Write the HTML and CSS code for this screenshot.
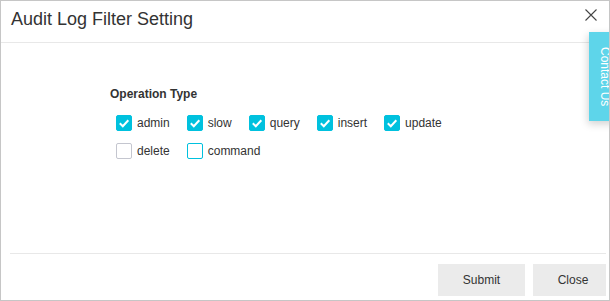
FILE: index.html
```html
<!DOCTYPE html>
<html>
<head>
<meta charset="utf-8">
<link rel="stylesheet" href="styles.css">
</head>
<body>
<div class="dialog">
  <div class="header">
    <div class="title">Audit Log Filter Setting</div>
    <svg class="close-x" width="12" height="12" viewBox="0 0 12 12"><path d="M0.5 0.5 L11.5 11.5 M11.5 0.5 L0.5 11.5" stroke="#444" stroke-width="1.1" fill="none"/></svg>
  </div>
  <div class="body">
    <div class="form">
      <div class="label">Operation Type</div>
      <div class="options">
        <label class="opt"><span class="cb on"><svg width="16" height="16" viewBox="0 0 16 16"><path d="M3.8 8.3 L6.8 11.2 L12.3 5.2" stroke="#fff" stroke-width="2" fill="none"/></svg></span>admin</label>
        <label class="opt"><span class="cb on"><svg width="16" height="16" viewBox="0 0 16 16"><path d="M3.8 8.3 L6.8 11.2 L12.3 5.2" stroke="#fff" stroke-width="2" fill="none"/></svg></span>slow</label>
        <label class="opt"><span class="cb on"><svg width="16" height="16" viewBox="0 0 16 16"><path d="M3.8 8.3 L6.8 11.2 L12.3 5.2" stroke="#fff" stroke-width="2" fill="none"/></svg></span>query</label>
        <label class="opt"><span class="cb on"><svg width="16" height="16" viewBox="0 0 16 16"><path d="M3.8 8.3 L6.8 11.2 L12.3 5.2" stroke="#fff" stroke-width="2" fill="none"/></svg></span>insert</label>
        <label class="opt"><span class="cb on"><svg width="16" height="16" viewBox="0 0 16 16"><path d="M3.8 8.3 L6.8 11.2 L12.3 5.2" stroke="#fff" stroke-width="2" fill="none"/></svg></span>update</label>
        <label class="opt"><span class="cb"></span>delete</label>
        <label class="opt"><span class="cb hover"></span>command</label>
      </div>
    </div>
  </div>
  <div class="footer">
    <button class="btn submit">Submit</button>
    <button class="btn close">Close</button>
  </div>
  <div class="contact">Contact Us</div>
</div>
</body>
</html>
```
FILE: styles.css
```css
html, body {
  margin: 0;
  padding: 0;
  overflow: hidden;
  background: #fff;
}
body {
  font-family: "Liberation Sans", Arial, sans-serif;
  color: #333;
}
.dialog {
  box-sizing: border-box;
  width: 610px;
  height: 301px;
  border: 1px solid #c6c6c6;
  position: relative;
  overflow: hidden;
  display: flex;
  flex-direction: column;
  background: #fff;
}
.header {
  display: flex;
  justify-content: space-between;
  align-items: flex-start;
  padding: 6px 12px 11px 10px;
  border-bottom: 1px solid #e8e8e8;
}
.title {
  font-size: 18px;
  line-height: 24px;
  color: #333;
}
.close-x {
  display: block;
  margin-top: 2px;
}
.body {
  flex: 1;
  padding-top: 43px;
}
.form {
  margin-left: 109px;
}
.label {
  font-size: 12px;
  font-weight: bold;
  line-height: 16px;
  margin-bottom: 7px;
  color: #333;
}
.options {
  display: flex;
  flex-wrap: wrap;
  width: 360px;
  margin-left: 6px;
}
.opt {
  display: flex;
  align-items: center;
  height: 28px;
  margin-right: 17px;
  font-size: 12px;
  color: #333;
}
.cb {
  box-sizing: border-box;
  width: 16px;
  height: 16px;
  border: 1px solid #c4c6cf;
  border-radius: 2px;
  margin-right: 5px;
  background: #fff;
  display: block;
  position: relative;
}
.cb.on {
  background: #00c1de;
  border-color: #00c1de;
}
.cb.on svg {
  position: absolute;
  left: -1px;
  top: -1px;
}
.cb.hover {
  border-color: #00c1de;
}
.footer {
  margin: 0 3px 0 9px;
  border-top: 1px solid #e8e8e8;
  padding: 10px 0 4px;
  display: flex;
  justify-content: flex-end;
  gap: 8px;
  overflow: hidden;
}
.btn {
  height: 32px;
  border: none;
  background: #ebebeb;
  font-family: "Liberation Sans", Arial, sans-serif;
  font-size: 12px;
  color: #333;
  padding: 0;
  flex: none;
}
.submit {
  width: 87px;
}
.close {
  width: 80px;
  margin-right: -7px;
}
.contact {
  position: absolute;
  top: 31px;
  left: 588px;
  box-sizing: border-box;
  width: 30px;
  height: 89px;
  padding: 15px 7px 0 0;
  writing-mode: vertical-rl;
  font-size: 12px;
  line-height: 14px;
  color: #fff;
  background: #5ed5ea;
  box-shadow: -1px 3px 8px rgba(0, 0, 0, 0.18);
}
```
